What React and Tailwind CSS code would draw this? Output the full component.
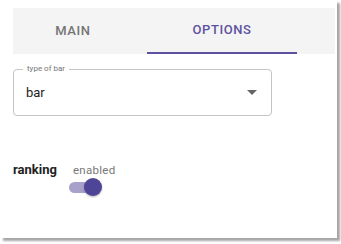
export default function App() {
  return (
    <div className="w-[341px] h-[244px] bg-white overflow-hidden font-['Roboto',sans-serif]">
      <div className="w-[337px] h-[238px] bg-white shadow-[3px_3px_2px_rgba(0,0,0,0.35)] pt-[8px] pl-[13px]">
        {/* Tabs */}
        <div className="w-[322px] h-[46px] bg-[#f4f4f4] flex">
          <div className="w-[134px] pr-[14px] flex items-center justify-center text-[13px] font-medium tracking-[0.6px] text-[#757575]">
            MAIN
          </div>
          <div className="w-[150px] flex flex-col">
            <div className="flex-1 flex items-center justify-center text-[13px] font-medium tracking-[0.6px] text-[#5e52a0]">
              OPTIONS
            </div>
            <div className="h-[2px] bg-[#5e52a0]" />
          </div>
        </div>

        {/* Select */}
        <div className="relative mt-[15px] w-[259px] h-[47px] border border-[#c4c4c4] rounded-[4px] flex items-center justify-between pl-[12px] pr-[14px]">
          <span className="absolute -top-[6px] left-[9px] bg-white px-[4px] text-[8px] leading-[10px] text-[#757575]">
            type of bar
          </span>
          <span className="text-[13px] text-[#222] mt-[1px]">bar</span>
          <svg width="10" height="5" viewBox="0 0 10 5">
            <path d="M0 0 L10 0 L5 5 Z" fill="#666" />
          </svg>
        </div>

        {/* Ranking switch */}
        <div className="flex mt-[43px]">
          <span className="text-[13px] leading-[18px] mt-[2px] font-bold text-[#222]">ranking</span>
          <div className="ml-[16px] flex flex-col">
            <span className="text-[11.5px] leading-[18px] mt-[2px] text-[#777] tracking-[0.3px]">enabled</span>
            <div className="relative w-[34px] h-[20px] -mt-[1px] -ml-[4px]">
              <div className="absolute left-[0px] top-[4px] w-[32px] h-[11px] rounded-full bg-[#a8a1cc]" />
              <div className="absolute left-[15px] top-0 w-[18px] h-[18px] rounded-full bg-[#4f4596] shadow-[0_1px_2px_rgba(0,0,0,0.3)]" />
            </div>
          </div>
        </div>
      </div>
    </div>
  );
}
